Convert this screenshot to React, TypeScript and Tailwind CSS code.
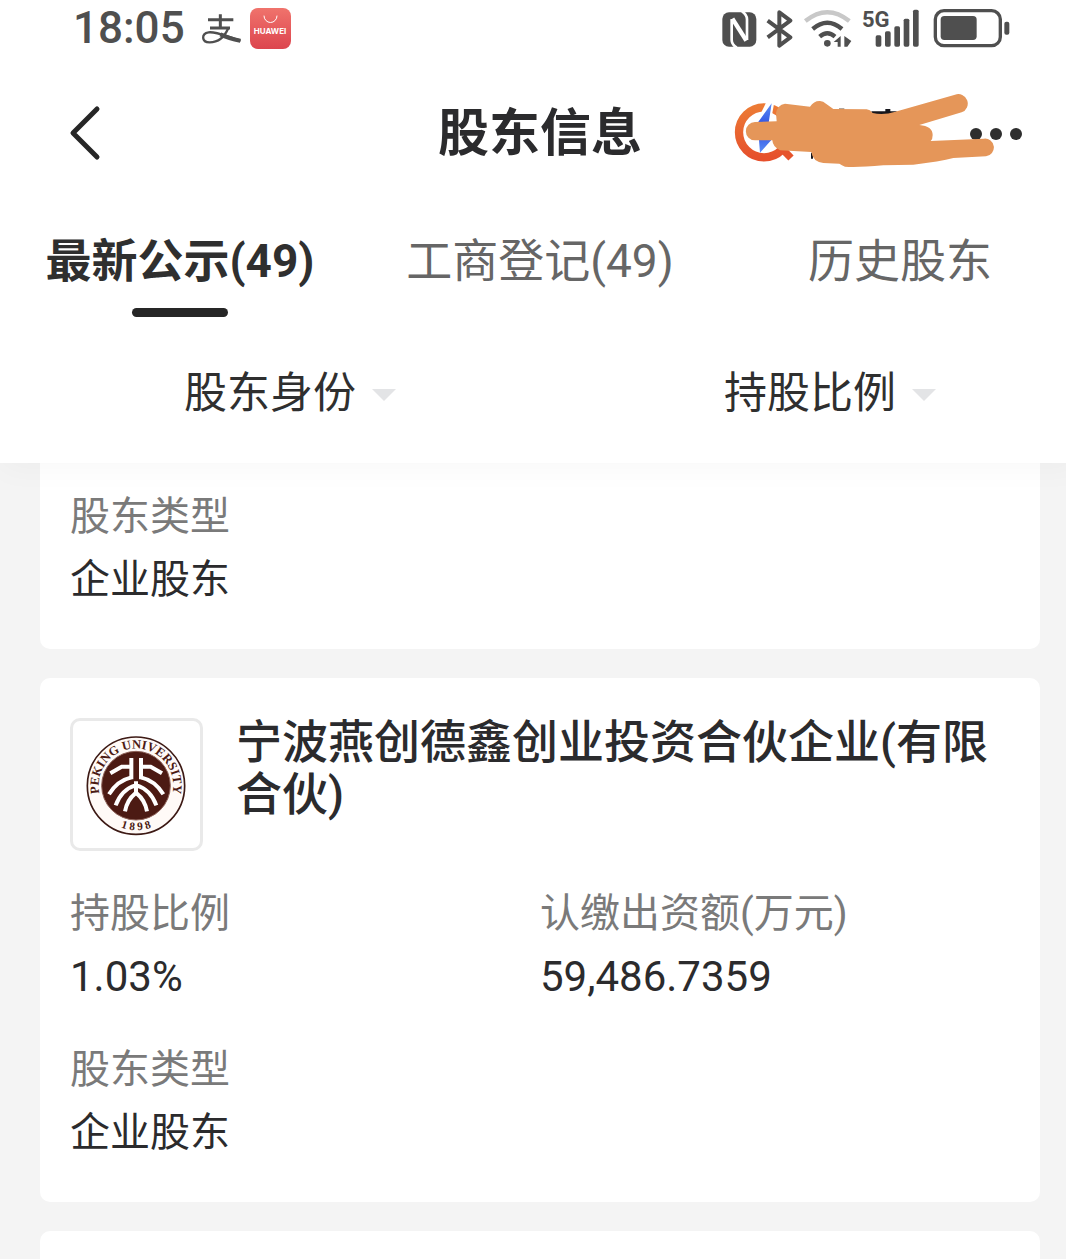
import { useState } from 'react';

interface Tab {
  id: string;
  label: string;
}

interface Field {
  label: string;
  value: string;
}

const TABS: Tab[] = [
  { id: 'latest', label: '最新公示(49)' },
  { id: 'registered', label: '工商登记(49)' },
  { id: 'history', label: '历史股东' },
];

const FILTERS = ['股东身份', '持股比例'];

const FIELDS: Field[] = [
  { label: '持股比例', value: '1.03%' },
  { label: '认缴出资额(万元)', value: '59,486.7359' },
  { label: '股东类型', value: '企业股东' },
];

function AlipayIcon() {
  return (
    <svg className="h-10 w-10" viewBox="447 22 120 120" fill="none" stroke="#4f4f4f" aria-hidden="true">
      <path d="M468 57H544M505 41V82M474 82H534" strokeWidth="9" />
      <path d="M529 82C518 108 500 125 473 125C448 125 447 99 470 95C495 92 525 109 566 120" strokeWidth="7" />
      <path d="M505 101Q530 113 565 120" strokeWidth="12" />
    </svg>
  );
}

function HuaweiIcon() {
  return (
    <svg className="h-[41px] w-[41px]" viewBox="0 0 41 41" aria-hidden="true">
      <defs>
        <linearGradient id="hw" x1="0" y1="0" x2="0" y2="1">
          <stop offset="0" stopColor="#f0736c" />
          <stop offset="1" stopColor="#dc454e" />
        </linearGradient>
      </defs>
      <rect width="41" height="41" rx="8" fill="url(#hw)" />
      <path d="M14 8a6 6 0 0 0 13 0" fill="none" stroke="#fff" strokeWidth="1" strokeLinecap="round" />
      <text x="20" y="26" textAnchor="middle" fill="#fff" fontSize="8" fontWeight="700" className="font-[Inter,sans-serif]">
        HUAWEI
      </text>
    </svg>
  );
}

function NfcIcon() {
  return (
    <svg className="h-10 w-[35px]" viewBox="62 22 105 120" aria-hidden="true">
      <rect x="63" y="35" width="102" height="103" rx="20" fill="#4f4f4f" />
      <g fill="none" stroke="#fff" strokeWidth="8">
        <path d="M122 32Q137 42 137 56V118" />
        <path d="M106 141Q91 131 91 118V56" />
        <path d="M93 54L135 120" strokeWidth="13" />
      </g>
    </svg>
  );
}

function BluetoothIcon() {
  return (
    <svg className="h-10 w-7" viewBox="197 22 84 120" fill="none" stroke="#4f4f4f" strokeWidth="12" strokeLinejoin="round" aria-hidden="true">
      <path d="M202 60L270 110L237 135V35L270 60L202 110" />
    </svg>
  );
}

function WifiIcon() {
  return (
    <svg className="h-10 w-[50px]" viewBox="308 22 150 120" fill="none" strokeWidth="13" aria-hidden="true">
      <path d="M315 61Q381 8 447 61" stroke="#c8c8c8" />
      <path d="M337 85Q381 48 425 85" stroke="#4f4f4f" />
      <path d="M358 108Q381 88 404 108" stroke="#4f4f4f" />
      <circle cx="381" cy="128" r="10" fill="#4f4f4f" />
      <path d="M421 106V138H412V124H400ZM432 106L453 121L441 138H432Z" fill="#4f4f4f" />
    </svg>
  );
}

function SignalIcon() {
  return (
    <svg className="h-10 w-[58px] overflow-visible" viewBox="485 22 174 120" fill="#4f4f4f" aria-label="5G">
      <text x="485" y="78" fontSize="66" fontWeight="700" className="font-['Liberation_Sans_Narrow',Roboto,sans-serif]">
        5G
      </text>
      <rect x="526" y="104" width="17" height="34" rx="5" />
      <rect x="554" y="92" width="17" height="46" rx="5" />
      <rect x="582" y="77" width="17" height="61" rx="5" />
      <rect x="610" y="54" width="17" height="84" rx="5" />
      <rect x="638" y="27" width="17" height="111" rx="5" />
    </svg>
  );
}

function BatteryIcon() {
  return (
    <svg className="ml-1 h-10 w-[77px]" viewBox="698 22 231 120" fill="#4f4f4f" aria-hidden="true">
      <rect x="705" y="30" width="195" height="105" rx="26" fill="none" stroke="#4f4f4f" strokeWidth="10" />
      <rect x="721" y="46" width="108" height="72" rx="11" />
      <rect x="912" y="63" width="15" height="39" rx="6" />
    </svg>
  );
}

function StatusBar() {
  return (
    <div className="flex h-14 items-center justify-between pr-[70px] pl-[73px]">
      <div className="flex items-center">
        <span className="mr-4 text-[44px] leading-[56px] font-medium text-[#4f4f4f]">18:05</span>
        <AlipayIcon />
        <span className="ml-[9px]">
          <HuaweiIcon />
        </span>
      </div>
      <div className="flex items-center gap-[9px]">
        <NfcIcon />
        <BluetoothIcon />
        <WifiIcon />
        <SignalIcon />
        <BatteryIcon />
      </div>
    </div>
  );
}

// Brand mark with the account name painted over
function BrandMark() {
  return (
    <svg className="relative z-10 h-20 w-[264px] shrink-0" viewBox="72 36 792 240" aria-hidden="true">
      <defs>
        <linearGradient id="ring" x1="0" y1="0" x2="0" y2="1">
          <stop offset="0" stopColor="#ec7a35" />
          <stop offset="1" stopColor="#e6502c" />
        </linearGradient>
        <linearGradient id="needle" x1="0" y1="0" x2="0" y2="1">
          <stop offset="0" stopColor="#5b8df5" />
          <stop offset="0.500" stopColor="#2a49e0" />
          <stop offset="1" stopColor="#5b8df5" />
        </linearGradient>
      </defs>
      <circle cx="162" cy="157" r="75" fill="none" stroke="url(#ring)" strokeWidth="25" />
      <path d="M215 205L243 234" stroke="#e6542c" strokeWidth="22" />
      <path d="M172 60H194L186 105H150Z" fill="#fff" />
      <path d="M185 70L143 128L150 218L186 178L176 128Z" fill="url(#needle)" />
      <path d="M484 94H526V87H541V94H560V112H490ZM303 218H309V236H303Z" fill="#16161c" />
      <path d="M387 85H403V92H387Z" fill="#8a7a6c" />
      <path
        d="M135 126L200 124L198 100Q202 74 225 71L300 80Q312 62 330 63Q340 64 348 71L370 87L470 88Q480 89 488 99Q520 107 556 95L735 44A28 28 0 0 1 755 97L628 135Q668 138 668 165Q668 178 662 183L822 176A26 26 0 0 1 828 229L730 234Q690 245 610 254L520 256Q440 263 405 260Q395 256 388 251L340 249Q308 245 304 216L210 211Q188 200 187 181L135 181A27 27 0 0 1 135 126Z"
        fill="#e59659"
      />
    </svg>
  );
}

function TitleBar() {
  return (
    <div className="grid h-[152px] grid-cols-[1fr_auto_1fr] items-center px-14">
      <button type="button" aria-label="返回" className="justify-self-start">
        <svg className="h-16 w-14" viewBox="0 0 56 64" fill="none" stroke="#262626" strokeWidth="5" strokeLinecap="round" strokeLinejoin="round">
          <path d="M41 9L17 33L41 57" />
        </svg>
      </button>
      <h1 className="pt-1 text-[51px] leading-[60px] font-bold text-[#2b2b2d]">股东信息</h1>
      <div className="mr-0.5 flex items-center justify-self-end">
        <BrandMark />
        <button type="button" aria-label="更多" className="-ml-7 flex w-[52px] items-center justify-between pt-1">
          <span className="h-3 w-3 rounded-full bg-[#2e2e2e]" />
          <span className="h-3 w-3 rounded-full bg-[#2e2e2e]" />
          <span className="h-3 w-3 rounded-full bg-[#2e2e2e]" />
        </button>
      </div>
    </div>
  );
}

function UniversityLogo() {
  return (
    <svg className="h-full w-full" viewBox="96 63 381 381" role="img" aria-label="Peking University">
      <defs>
        <path id="arcTop" d="M181 299A112 112 0 1 1 389 299" />
        <path id="arcBottom" d="M205 364A134 134 0 0 0 365 364" />
      </defs>
      <circle cx="285" cy="257" r="146" fill="#fffaf7" stroke="#3d1a15" strokeWidth="5" />
      <circle cx="285" cy="257" r="103" fill="#4c1a13" stroke="#8d6259" strokeWidth="3" />
      <g fill="#4c1a13" fontWeight="700" className="font-['Liberation_Serif',serif]">
        <text fontSize="38" textAnchor="middle">
          <textPath href="#arcTop" startOffset="50%">PEKING UNIVERSITY</textPath>
        </text>
        <text fontSize="34" textAnchor="middle">
          <textPath href="#arcBottom" startOffset="50%">1 8 9 8</textPath>
        </text>
      </g>
      <g fill="none" stroke="#fff" strokeWidth="12">
        <path d="M271 174V238M300 174V238" />
        <path d="M271 200H242L208 220M300 200H329L363 220" />
        <path d="M271 232Q228 242 204 283M300 232Q343 242 367 283" />
        <path d="M285 244V282M283 256Q242 268 224 316M287 256Q328 268 346 316" />
        <path d="M283 280Q258 300 252 334M287 280Q312 300 318 334" />
      </g>
    </svg>
  );
}

function FieldItem({ label, value }: Field) {
  const numeric = /^[\d.,%]+$/.test(value);

  return (
    <div className="text-[40px] leading-[63px]">
      <dt className="text-[#7a7a7a]">{label}</dt>
      <dd className={numeric ? 'text-[42px] text-[#2b2b2d]' : 'text-[#2b2b2d]'}>{value}</dd>
    </div>
  );
}

export default function App() {
  const [activeTab, setActiveTab] = useState('latest');

  return (
    <div className="min-h-screen overflow-hidden bg-[#f4f4f4] font-[Roboto,'Noto_Sans_CJK_SC',sans-serif]">
      <div className="-mr-3.5 flex min-h-screen flex-col">
        <header className="relative z-10 bg-white shadow-[0_6px_30px_rgba(0,0,0,0.03)]">
          <StatusBar />
          <TitleBar />

          <nav className="grid grid-cols-3 pt-[23px]">
            {TABS.map((tab) => {
              const active = tab.id === activeTab;
              return (
                <button
                  key={tab.id}
                  type="button"
                  onClick={() => setActiveTab(tab.id)}
                  className={`flex flex-col items-center gap-[17px] text-[46px] leading-[60px] whitespace-nowrap ${
                    active ? 'font-bold text-[#2f2f2f]' : 'text-[#666]'
                  }`}
                >
                  {tab.label}
                  <span className={`h-[9px] w-24 rounded-full ${active ? 'bg-[#262626]' : 'bg-transparent'}`} />
                </button>
              );
            })}
          </nav>

          <div className="grid grid-cols-2 pt-[46px] pb-10">
            {FILTERS.map((name) => (
              <button key={name} type="button" className="flex items-center justify-center text-[43px] leading-[60px] text-[#2f2f2f]">
                {name}
                {/* caret hangs outside so the label stays centred */}
                <svg className="mt-1 -mr-10 ml-4 h-3 w-6" viewBox="0 0 24 12" fill="#e3e4e6" aria-hidden="true">
                  <path d="M0 0H24L12 12Z" />
                </svg>
              </button>
            ))}
          </div>
        </header>

        <main className="flex flex-1 flex-col gap-[29px] px-10">
          <section className="rounded-b-[10px] bg-white px-[30px] pt-[22px] pb-[38px]">
            <dl>
              <FieldItem label="股东类型" value="企业股东" />
            </dl>
          </section>

          <section className="rounded-[10px] bg-white px-[30px] pt-10 pb-[38px]">
            <div className="flex gap-[33px]">
              <div className="h-[133px] w-[133px] shrink-0 overflow-hidden rounded-[10px] border-[3px] border-[#e9e9e9]">
                <UniversityLogo />
              </div>
              <h2 className="-mt-0.5 text-[46px] leading-[52px] font-medium text-[#2b2b2d]">
                宁波燕创德鑫创业投资合伙企业(有限合伙)
              </h2>
            </div>
            <dl className="mt-[31px] grid grid-cols-2 gap-y-[30px]">
              {FIELDS.map((field) => (
                <FieldItem key={field.label} {...field} />
              ))}
            </dl>
          </section>

          <section className="min-h-7 flex-1 rounded-t-[10px] bg-white" />
        </main>
      </div>
    </div>
  );
}
